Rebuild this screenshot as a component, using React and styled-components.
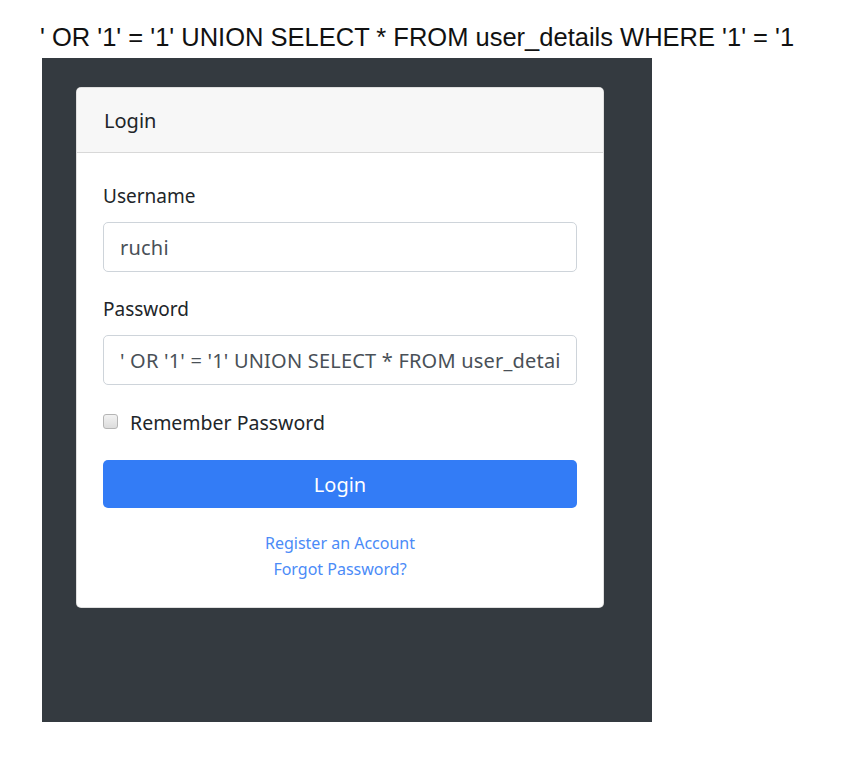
import styled, { createGlobalStyle } from "styled-components";

const GlobalStyle = createGlobalStyle`
  html, body {
    margin: 0;
    background: #fff;
  }
  * {
    box-sizing: border-box;
  }
`;

const Page = styled.div`
  padding: 22px 0 0 40px;
`;

const Query = styled.h1`
  margin: 0 0 6px;
  font-family: "Liberation Sans", Arial, sans-serif;
  font-weight: 400;
  font-size: 25.5px;
  line-height: 30px;
  color: #111;
  white-space: nowrap;
`;

const Panel = styled.div`
  width: 610px;
  height: 664px;
  margin-left: 2px;
  padding: 29px 48px 0 34px;
  background: #343a40;
`;

const Card = styled.div`
  background: #fff;
  border: 1px solid rgba(0, 0, 0, 0.125);
  border-radius: 5px;
  font-family: "Noto Sans", "Open Sans", sans-serif;
  color: #212529;
`;

const CardHeader = styled.div`
  height: 65px;
  padding: 0 27px;
  display: flex;
  align-items: center;
  background: #f7f7f7;
  border-bottom: 1px solid rgba(0, 0, 0, 0.125);
  border-radius: 4px 4px 0 0;
  font-size: 20px;
`;

const CardBody = styled.div`
  padding: 31px 26px 26px;
  display: flex;
  flex-direction: column;
`;

const Label = styled.label`
  font-size: 19px;
  line-height: 24px;
  margin-bottom: 14px;
`;

const Input = styled.input`
  width: 100%;
  height: 50px;
  padding: 0 16px;
  margin-bottom: 25px;
  border: 1px solid #ced4da;
  border-radius: 5px;
  font-family: inherit;
  font-size: 20px;
  letter-spacing: 0.2px;
  color: #495057;
  outline: none;
`;

const CheckRow = styled.div`
  display: flex;
  align-items: center;
  gap: 12px;
  font-size: 19.5px;
  line-height: 24px;
  margin: 1px 0 25px;
`;

const Check = styled.span`
  width: 15px;
  height: 15px;
  border: 1px solid #b5b5b5;
  border-radius: 3px;
  background: linear-gradient(#f2f2f2, #dcdcdc);
  margin-top: -4px;
`;

const Button = styled.button`
  height: 48px;
  width: 100%;
  border: none;
  border-radius: 5px;
  background: #337cf6;
  color: #fff;
  font-family: inherit;
  font-size: 20px;
  margin-bottom: 23px;
`;

const Links = styled.div`
  display: flex;
  flex-direction: column;
  align-items: center;
  gap: 2px;
`;

const Link = styled.a`
  color: #4b8bf7;
  font-size: 16px;
  line-height: 24px;
  text-decoration: none;
`;

const sql = "' OR '1' = '1' UNION SELECT * FROM user_details WHERE '1' = '1";

export default function App() {
  return (
    <>
      <GlobalStyle />
      <Page>
        <Query>{sql}</Query>
        <Panel>
          <Card>
            <CardHeader>Login</CardHeader>
            <CardBody>
              <Label>Username</Label>
              <Input defaultValue="ruchi" readOnly />
              <Label>Password</Label>
              <Input defaultValue={sql} readOnly />
              <CheckRow>
                <Check />
                Remember Password
              </CheckRow>
              <Button>Login</Button>
              <Links>
                <Link href="#">Register an Account</Link>
                <Link href="#">Forgot Password?</Link>
              </Links>
            </CardBody>
          </Card>
        </Panel>
      </Page>
    </>
  );
}
